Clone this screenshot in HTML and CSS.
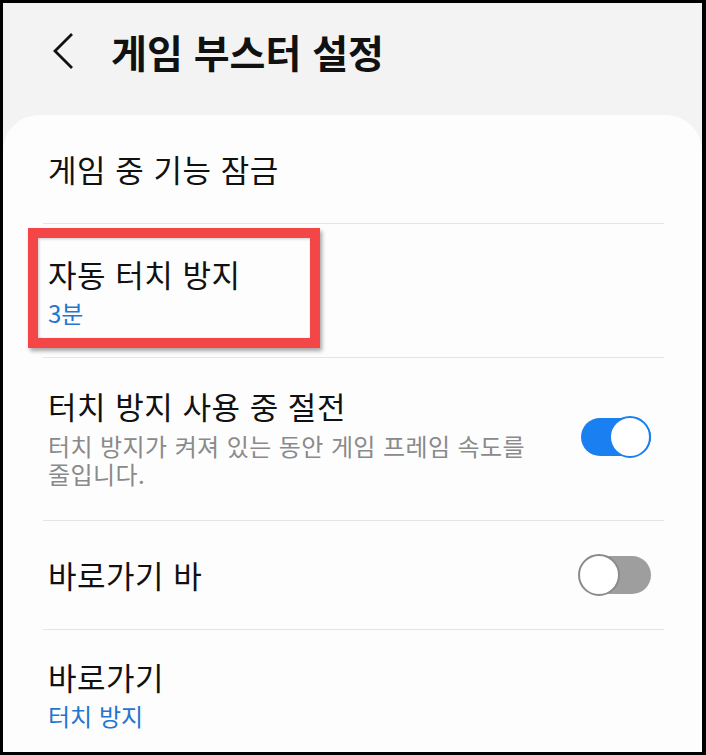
FILE: index.html
```html
<!DOCTYPE html>
<html lang="ko">
<head>
  <meta charset="UTF-8" />
  <meta name="viewport" content="width=device-width, initial-scale=1.0" />
  <title>게임 부스터 설정</title>
  <link rel="stylesheet" href="styles.css">
</head>
<body>
  <div class="screen">
    <header class="appbar">
      <button class="back" aria-label="뒤로">
        <svg width="22" height="38" viewBox="0 0 22 38">
          <polyline points="19,2 2,19 19,36" fill="none" stroke="#111" stroke-width="2.8" />
        </svg>
      </button>
      <h1>게임 부스터 설정</h1>
    </header>

    <section class="card">
      <div class="item">
        <div class="item-text">
          <div class="item-title">게임 중 기능 잠금</div>
        </div>
      </div>

      <div class="item item-two">
        <div class="item-text">
          <div class="item-title">자동 터치 방지</div>
          <div class="item-sub">3분</div>
        </div>
        <span class="mark"></span>
      </div>

      <div class="item item-three">
        <div class="item-text">
          <div class="item-title">터치 방지 사용 중 절전</div>
          <div class="item-desc">터치 방지가 켜져 있는 동안 게임 프레임 속도를 줄입니다.</div>
        </div>
        <span class="toggle on"><span class="track"></span><span class="knob"></span></span>
      </div>

      <div class="item">
        <div class="item-text">
          <div class="item-title">바로가기 바</div>
        </div>
        <span class="toggle"><span class="track"></span><span class="knob"></span></span>
      </div>

      <div class="item item-last">
        <div class="item-text">
          <div class="item-title">바로가기</div>
          <div class="item-sub">터치 방지</div>
        </div>
      </div>
    </section>
  </div>
</body>
</html>
```

FILE: styles.css
```css
* {
  box-sizing: border-box;
}

body {
  margin: 0;
  font-family: "Noto Sans CJK KR", "Noto Sans", sans-serif;
  color: #111;
}

.screen {
  width: 706px;
  height: 755px;
  border-style: solid;
  border-color: #000;
  border-width: 3px 4px 3px 3px;
  background-color: #f3f3f3;
  display: flex;
  flex-direction: column;
  overflow: hidden;
}

.appbar {
  height: 112px;
  flex-shrink: 0;
  display: flex;
  align-items: center;
  gap: 36px;
  padding: 0 0 16px 50px;
}

.back {
  border: none;
  background: none;
  padding: 0;
  width: 22px;
  height: 38px;
  display: flex;
}

.appbar h1 {
  margin: 0;
  font-size: 39px;
  font-weight: 700;
  line-height: 50px;
  color: #111;
}

.card {
  flex: 1;
  background-color: #fdfdfd;
  border-radius: 36px 36px 0 0;
  padding: 0 38px 0 40px;
}

.item {
  position: relative;
  display: flex;
  align-items: center;
  gap: 24px;
  padding: 34px 13px 34px 5px;
  border-bottom: 1px solid #e5e5e5;
}

.item-two {
  padding-top: 30px;
  padding-bottom: 29px;
}

.item-three {
  padding-top: 28px;
  padding-bottom: 32px;
}

.item-last {
  border-bottom: none;
  padding-top: 27px;
}

.item-text {
  flex: 1;
  min-width: 0;
  word-break: keep-all;
}

.item-title {
  font-size: 31px;
  letter-spacing: 0.5px;
  line-height: 40px;
}

.item-sub {
  margin-top: 4px;
  font-size: 24px;
  line-height: 30px;
  color: #1f76cf;
}

.item-desc {
  margin-top: 6px;
  font-size: 24px;
  letter-spacing: 0.4px;
  line-height: 28px;
  color: #8a8a8a;
}

/* red annotation frame over the auto touch lock row */
.mark {
  position: absolute;
  left: -15px;
  top: 4px;
  width: 292px;
  height: 120px;
  border: 10px solid #f44547;
  box-shadow: 2px 3px 4px rgba(0, 0, 0, 0.35), inset 1px 1px 3px rgba(0, 0, 0, 0.2);
  pointer-events: none;
}

.toggle {
  position: relative;
  flex-shrink: 0;
  width: 73px;
  height: 40px;
}

.toggle .track {
  position: absolute;
  left: 3px;
  right: 0;
  top: 1px;
  height: 38px;
  border-radius: 19px;
  background-color: #9e9e9e;
}

.toggle .knob {
  position: absolute;
  left: 0;
  top: -1px;
  width: 42px;
  height: 42px;
  border-radius: 50%;
  border: 2px solid #8a8a8a;
  background-color: #fff;
}

.toggle.on .track {
  background-color: #1a7ff0;
}

.toggle.on .knob {
  left: auto;
  right: 0;
  border-color: #1a7ff0;
}
```
